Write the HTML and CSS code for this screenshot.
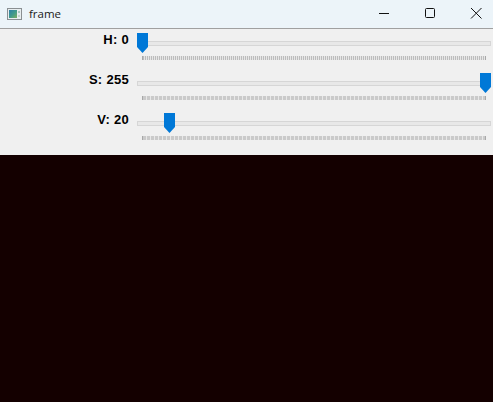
FILE: index.html
```html
<!DOCTYPE html>
<html lang="en">
<head>
  <meta charset="UTF-8" />
  <title>frame</title>
  <link rel="stylesheet" href="styles.css">
</head>
<body>
  <div class="titlebar">
    <svg class="app-icon" width="15" height="12" viewBox="0 0 15 12">
      <defs>
        <linearGradient id="pic" x1="0" y1="0" x2="1" y2="1">
          <stop offset="0" stop-color="#2f7fa8"/>
          <stop offset="0.5" stop-color="#3f9a8c"/>
          <stop offset="1" stop-color="#7bb060"/>
        </linearGradient>
      </defs>
      <rect x="0.5" y="0.5" width="14" height="11" fill="#e8eef0" stroke="#8a8f92"/>
      <rect x="2" y="2" width="8" height="8" fill="url(#pic)"/>
      <rect x="11" y="3" width="2" height="2" fill="#a9c9c0"/>
      <rect x="11" y="7" width="2" height="2" fill="#c3d4cf"/>
    </svg>
    <span class="title">frame</span>
    <div class="controls">
      <svg class="control" width="46" height="28" viewBox="0 0 46 28">
        <path d="M18 13.500h10" stroke="#111" fill="none"/>
      </svg>
      <svg class="control" width="46" height="28" viewBox="0 0 46 28">
        <rect x="18.500" y="8.500" width="9" height="9" rx="1" stroke="#111" fill="none"/>
      </svg>
      <svg class="control" width="46" height="28" viewBox="0 0 46 28">
        <path d="M18 8l10.500 10.500M28.500 8L18 18.500" stroke="#111" fill="none"/>
      </svg>
    </div>
  </div>

  <div class="panel">
    <div class="row">
      <div class="label">H: 0</div>
      <div class="slider">
        <div class="track"></div>
        <div class="thumb" style="left: 0px"></div>
        <div class="ticks ticks-fine"></div>
      </div>
    </div>
    <div class="row">
      <div class="label">S: 255</div>
      <div class="slider">
        <div class="track"></div>
        <div class="thumb" style="left: 343px"></div>
        <div class="ticks"></div>
      </div>
    </div>
    <div class="row">
      <div class="label">V: 20</div>
      <div class="slider">
        <div class="track"></div>
        <div class="thumb" style="left: 27px"></div>
        <div class="ticks"></div>
      </div>
    </div>
  </div>

  <div class="image"></div>
</body>
</html>
```

FILE: styles.css
```css
html, body {
  margin: 0;
  height: 100%;
}

body {
  display: flex;
  flex-direction: column;
  overflow: hidden;
  background: #140000;
  font-family: "Liberation Sans", Arial, sans-serif;
}

.titlebar {
  display: flex;
  align-items: center;
  height: 28px;
  flex: none;
  background: #ecf4f9;
  border-bottom: 1px solid #a0a0a0;
}

.app-icon {
  margin: 0 7px 0 7px;
}

.title {
  margin-bottom: 1px;
  font-family: "Open Sans", sans-serif;
  font-size: 11.5px;
  color: #1a1a1a;
}

.controls {
  display: flex;
  margin-left: auto;
  margin-right: -6px;
}

.control {
  display: block;
}

.panel {
  flex: none;
  height: 126px;
  background: #f0f0f0;
}

.row {
  display: flex;
  height: 40px;
  padding-top: 2px;
  box-sizing: border-box;
}

.label {
  width: 129px;
  padding-top: 1px;
  text-align: right;
  font-size: 13px;
  line-height: 15px;
  font-weight: bold;
  letter-spacing: 0.3px;
  color: #000;
}

.slider {
  position: relative;
  flex: 1;
  margin: 0 2px 0 8px;
  padding-top: 10px;
}

.track {
  height: 3px;
  background: #e8e8e8;
  border: 1px solid #d6d6d6;
}

.ticks {
  height: 4px;
  margin: 10px 5px 0;
  background: repeating-linear-gradient(90deg, #cacaca 0 3px, #e8e8e8 3px 4px);
  border-left: 1px solid #a8a8a8;
  border-right: 1px solid #a8a8a8;
}

.ticks-fine {
  background: repeating-linear-gradient(90deg, #bcbcbc 0 1px, #e6e6e6 1px 2px);
}

.thumb {
  position: absolute;
  top: 2px;
  width: 11px;
  height: 20px;
  background: #0078d7;
  clip-path: polygon(0 0, 100% 0, 100% 70%, 50% 100%, 0 70%);
}

.image {
  flex: 1;
  background: #140000;
}
```
